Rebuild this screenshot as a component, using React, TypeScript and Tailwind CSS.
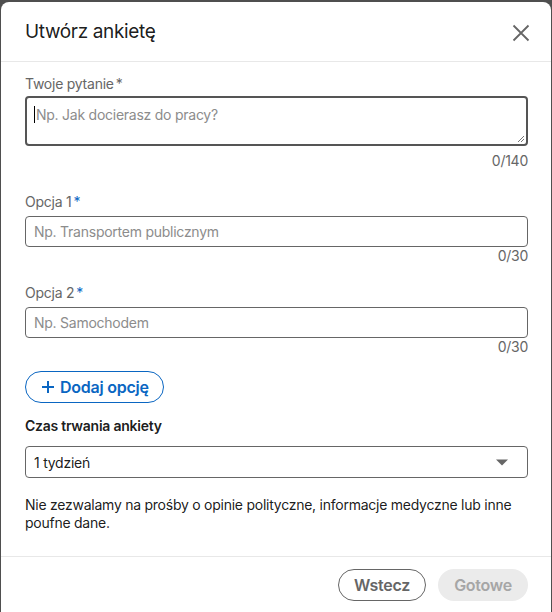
import React from "react";

function Field({ label, placeholder, count }: { label: string; placeholder: string; count: string }) {
  return (
    <div className="flex flex-col">
      <label className="text-[14px] leading-[20px] text-[#666666]">
        {label}
        <span className="text-[#0a66c2] ml-[2px]">*</span>
      </label>
      <div className="mt-[4px] h-[31px] rounded-[4px] border border-[#666666] px-[8px] flex items-center text-[14px] text-[#8c8c8c]">
        {placeholder}
      </div>
      <div className="text-right text-[14px] leading-[20px] text-[#666666] -mt-[1px]">{count}</div>
    </div>
  );
}

export default function App() {
  return (
    <div className="w-[552px] h-[612px] bg-[#4f4f4f] overflow-hidden tracking-[-0.25px]" style={{ fontFamily: "Inter, 'Noto Sans', sans-serif" }}>
      <div className="ml-[1px] mt-[2px] w-[550px] h-[620px] bg-white rounded-[8px] flex flex-col">
        <div className="h-[60px] flex items-center justify-between pl-[24px] pr-[18px] pt-[2px] border-b border-[#e8e8e8]">
          <h2 className="text-[19px] tracking-[-0.35px] text-[#000000e6] font-normal">Utwórz ankietę</h2>
          <svg width="24" height="24" viewBox="0 0 24 24" className="text-[#666666]">
            <path d="M4.5 4.5 L19.5 19.5 M19.5 4.5 L4.5 19.5" stroke="currentColor" strokeWidth="1.8" fill="none" />
          </svg>
        </div>
        <div className="pl-[24px] pr-[23px] pt-[12px] flex flex-col">
          <label className="text-[14px] leading-[20px] text-[#666666]">
            Twoje pytanie<span className="ml-[2px]">*</span>
          </label>
          <div className="relative mt-[2px] h-[50px] rounded-[4px] border-2 border-[#555555] px-[7px] pt-[6px] text-[14px] text-[#8c8c8c]">
            <span className="border-l border-[#000] pl-[1px]">Np. Jak docierasz do pracy?</span>
            <svg width="8" height="8" viewBox="0 0 8 8" className="absolute right-[1px] bottom-[1px]">
              <path d="M7 1 L1 7 M7 4 L4 7" stroke="#777" strokeWidth="1" />
            </svg>
          </div>
          <div className="text-right text-[14px] leading-[20px] text-[#666666] mt-[5px]">0/140</div>
          <div className="mt-[21px] flex flex-col gap-[17px]">
            <Field label="Opcja 1" placeholder="Np. Transportem publicznym" count="0/30" />
            <Field label="Opcja 2" placeholder="Np. Samochodem" count="0/30" />
          </div>
          <div className="mt-[14px]">
            <button className="h-[32px] px-[14px] rounded-full border border-[#0a66c2] text-[#0a66c2] text-[16px] font-semibold flex items-center gap-[4px]">
              <svg width="16" height="16" viewBox="0 0 16 16">
                <path d="M8 2 V14 M2 8 H14" stroke="currentColor" strokeWidth="2" />
              </svg>
              Dodaj opcję
            </button>
          </div>
          <div className="mt-[13px] text-[14px] leading-[20px] font-semibold text-[#000000e6]">Czas trwania ankiety</div>
          <div className="mt-[10px] h-[32px] rounded-[4px] border border-[#666666] px-[8px] flex items-center justify-between text-[14px] text-[#000000e6]">
            <span>1 tydzień</span>
            <svg width="12" height="7" viewBox="0 0 12 7" className="mr-[11px]">
              <path d="M0 0.5 H12 L6 6.5 Z" fill="#666" />
            </svg>
          </div>
          <p className="mt-[18px] text-[14px] leading-[18px] text-[#000000e6]">
            Nie zezwalamy na prośby o opinie polityczne, informacje medyczne lub inne poufne dane.
          </p>
        </div>
        <div className="mt-[24px] border-t border-[#e8e8e8] pl-[24px] pr-[23px] pt-[12px] flex justify-end gap-[12px]">
          <button className="h-[32px] px-[15px] rounded-full border border-[#666666] text-[#666666] text-[16px] font-semibold">Wstecz</button>
          <button className="h-[32px] px-[16px] rounded-full bg-[#ebebeb] text-[#a6a6a6] text-[16px] font-semibold">Gotowe</button>
        </div>
      </div>
    </div>
  );
}
